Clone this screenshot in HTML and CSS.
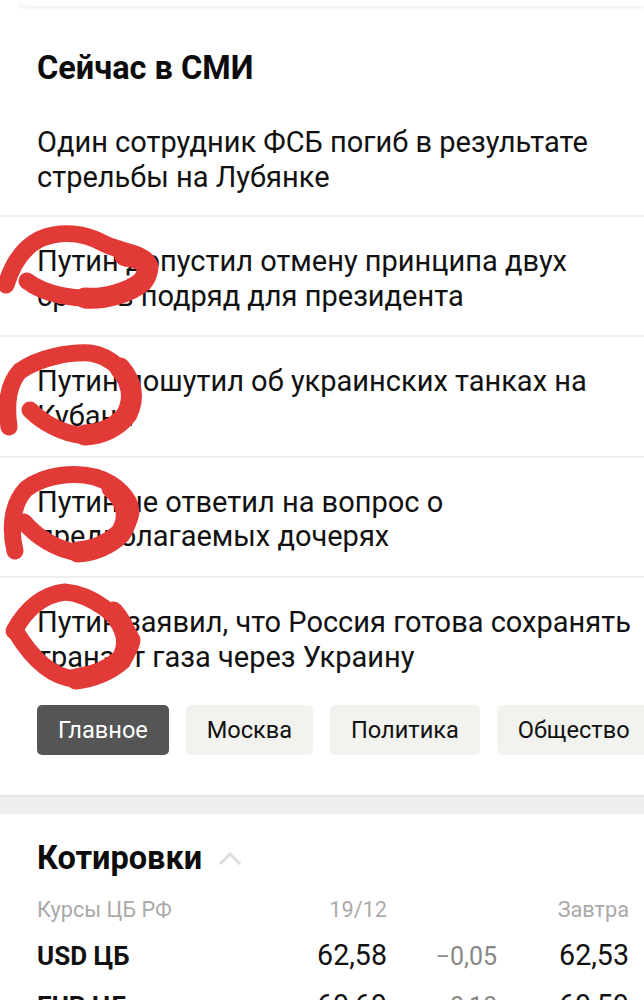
FILE: index.html
```html
<!DOCTYPE html>
<html lang="ru">
<head>
    <meta charset="UTF-8">
    <meta name="viewport" content="width=device-width, initial-scale=1.0">
    <title>Сейчас в СМИ</title>
    <link rel="stylesheet" href="styles.css">
</head>
<body>
    <div class="top-card"></div>

    <section class="news">
        <h2 class="section-title">Сейчас в СМИ</h2>
        <ul class="news-list">
            <li class="news-item">Один сотрудник ФСБ погиб в результате стрельбы на Лубянке</li>
            <li class="news-item">Путин допустил отмену принципа двух сроков подряд для президента</li>
            <li class="news-item">Путин пошутил об украинских танках на Кубани</li>
            <li class="news-item">Путин не ответил на вопрос о предполагаемых дочерях</li>
            <li class="news-item">Путин заявил, что Россия готова сохранять транзит газа через Украину</li>
        </ul>
        <div class="chips">
            <span class="chip active">Главное</span>
            <span class="chip">Москва</span>
            <span class="chip">Политика</span>
            <span class="chip">Общество</span>
        </div>
    </section>

    <div class="band"></div>

    <section class="quotes">
        <div class="quotes-head">
            <h2 class="section-title">Котировки</h2>
            <svg class="chevron" width="24" height="14" viewBox="0 0 24 14">
                <path d="M2 13 L12 3 L22 13" fill="none" stroke="#ddd" stroke-width="3"/>
            </svg>
        </div>
        <div class="quote-row quote-labels">
            <span class="q-name">Курсы ЦБ РФ</span>
            <span class="q-val">19/12</span>
            <span class="q-diff"></span>
            <span class="q-next">Завтра</span>
        </div>
        <div class="quote-row">
            <span class="q-name">USD ЦБ</span>
            <span class="q-val">62,58</span>
            <span class="q-diff">−0,05</span>
            <span class="q-next">62,53</span>
        </div>
        <div class="quote-row">
            <span class="q-name">EUR ЦБ</span>
            <span class="q-val">69,69</span>
            <span class="q-diff">−0,10</span>
            <span class="q-next">69,59</span>
        </div>
    </section>

    <!-- red marker circles drawn over the screenshot -->
    <svg class="marker" width="644" height="1000" viewBox="0 0 644 1000">
        <path d="M6 285 C12 265 22 248 40 239 C62 230 85 233 105 244 C120 252 145 252 150 266 C150 280 130 295 105 298 C75 300 45 295 27 281"/>
        <path class="thick" d="M125 256 C148 258 152 270 142 282 C130 292 105 300 85 298"/>
        <path d="M9 427 C6 405 7 385 20 371 C40 357 70 352 90 353 C113 356 128 375 132 392 C132 415 115 433 85 436 C62 434 42 422 30 410"/>
        <path class="thick" d="M120 368 C132 382 135 398 127 414 C117 428 100 434 85 435"/>
        <path d="M15 551 C10 530 11 505 26 489 C45 474 75 472 95 477 C118 484 131 500 131 512 C128 533 105 550 80 553 C55 550 35 535 24 522"/>
        <path class="thick" d="M112 488 C128 502 131 518 120 534 C107 546 92 551 78 552"/>
        <path d="M14 631 C25 611 40 595 65 592 C90 594 121 615 132 640 C129 658 105 677 75 679 C50 677 30 655 16 632"/>
        <path class="thick" d="M113 612 C127 628 131 645 121 660 C107 672 92 677 76 679"/>
    </svg>
</body>
</html>
```

FILE: styles.css
```css
* {
    margin: 0;
    padding: 0;
    box-sizing: border-box;
}

html, body {
    height: 1000px;
    overflow: hidden;
}

body {
    background-color: #fff;
    color: #111;
    font-family: Roboto, sans-serif;
    position: relative;
}

.top-card {
    height: 6px;
    margin-left: 20px;
    background-color: #fff;
    border-radius: 0 0 0 8px;
    box-shadow: 0 1px 5px rgba(0, 0, 0, 0.1);
}

.section-title {
    font-size: 32.5px;
    line-height: 36px;
    font-weight: 700;
    color: #0c0c0c;
}

.news {
    padding-top: 44px;
}

.news .section-title {
    padding-left: 37px;
}

.news-list {
    list-style: none;
    margin-top: 20px;
}

.news-item {
    height: 120.4px;
    padding: 27px 10px 0 37px;
    font-size: 29px;
    line-height: 34.6px;
    border-bottom: 2px solid #f0f0f0;
}

.news-item:first-child {
    height: 111px;
    padding-top: 19px;
}

.news-item:last-child {
    height: 127px;
    border-bottom: 0;
}

.chips {
    display: flex;
    gap: 16.8px;
    padding-left: 37px;
    overflow: hidden;
}

.chip {
    flex-shrink: 0;
    height: 50px;
    padding: 0 21px;
    font-size: 23.6px;
    line-height: 50px;
    background-color: #f2f2ef;
    border-radius: 5px;
}

.chip.active {
    background-color: #555;
    color: #fff;
}

.band {
    height: 19px;
    margin-top: 40px;
    background-color: #efefef;
    border-top: 2px solid #e4e4e4;
}

.quotes {
    padding: 26px 15px 0 37px;
}

.quotes-head {
    display: flex;
    align-items: center;
    gap: 16px;
}

.quote-row {
    display: grid;
    grid-template-columns: 1fr 90px 110px 132px;
    align-items: baseline;
    height: 50px;
    font-size: 28.6px;
    line-height: 50px;
}

.quote-labels {
    margin-top: 14px;
    height: 40px;
    font-size: 21.7px;
    line-height: 40px;
    color: #aaa;
}

.q-name {
    font-weight: 700;
    font-size: 26px;
}

.quote-labels .q-name {
    font-weight: 400;
    font-size: 21.7px;
}

.q-val, .q-diff, .q-next {
    text-align: right;
}

.q-diff {
    font-size: 25px;
    color: #888;
}

.marker {
    position: absolute;
    top: 0;
    left: 0;
    pointer-events: none;
}

.marker path {
    fill: none;
    stroke: #e23a36;
    stroke-width: 17;
    stroke-linecap: round;
    stroke-linejoin: round;
}

.marker .thick {
    stroke-width: 21;
}
```
